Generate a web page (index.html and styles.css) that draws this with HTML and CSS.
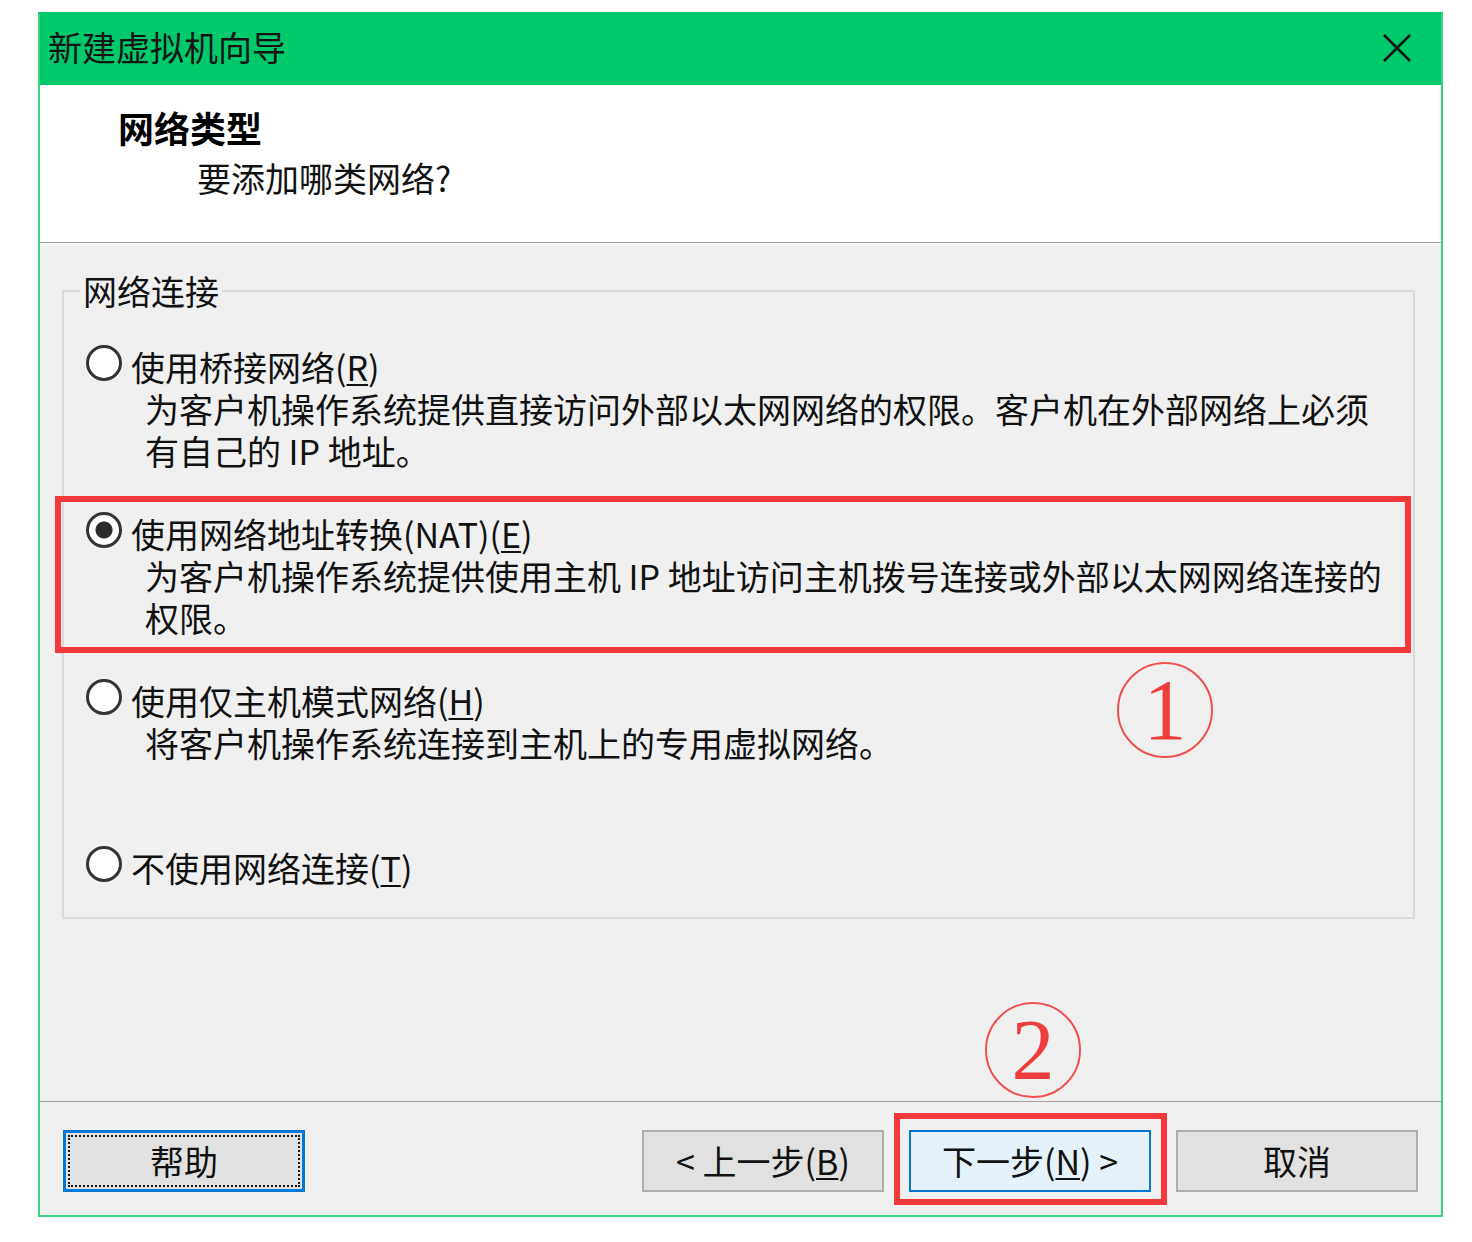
FILE: index.html
```html
<!DOCTYPE html>
<html lang="zh-CN">
<head>
    <meta charset="UTF-8">
    <meta name="viewport" content="width=device-width, initial-scale=1.0">
    <title>新建虚拟机向导</title>
    <link rel="stylesheet" href="styles.css">
</head>
<body>
    <div class="wizard">
        <div class="title-bar">
            <span class="title">新建虚拟机向导</span>
            <svg class="close-icon" width="30" height="30" viewBox="0 0 30 30">
                <path d="M2 2 L28 28 M28 2 L2 28" stroke="#151515" stroke-width="2.6" fill="none"/>
            </svg>
        </div>

        <div class="header">
            <h1>网络类型</h1>
            <p>要添加哪类网络?</p>
        </div>

        <div class="content">
            <fieldset class="group">
                <legend>网络连接</legend>

                <div class="option">
                    <div class="option-label"><span class="radio"></span>使用桥接网络(<u>R</u>)</div>
                    <div class="option-desc">为客户机操作系统提供直接访问外部以太网网络的权限。客户机在外部网络上必须<br>有自己的 IP 地址。</div>
                </div>

                <div class="option">
                    <div class="option-label"><span class="radio checked"></span>使用网络地址转换(NAT)(<u>E</u>)</div>
                    <div class="option-desc">为客户机操作系统提供使用主机 IP 地址访问主机拨号连接或外部以太网网络连接的<br>权限。</div>
                </div>

                <div class="option">
                    <div class="option-label"><span class="radio"></span>使用仅主机模式网络(<u>H</u>)</div>
                    <div class="option-desc">将客户机操作系统连接到主机上的专用虚拟网络。</div>
                </div>

                <div class="option option-none">
                    <div class="option-label"><span class="radio"></span>不使用网络连接(<u>T</u>)</div>
                </div>
            </fieldset>
        </div>

        <div class="footer">
            <button class="btn btn-help">帮助</button>
            <div class="nav-buttons">
                <button class="btn">&lt; 上一步(<u>B</u>)</button>
                <button class="btn btn-default">下一步(<u>N</u>) &gt;</button>
                <button class="btn">取消</button>
            </div>
        </div>

        <!-- annotations -->
        <div class="mark-box mark-nat"></div>
        <div class="mark-box mark-next"></div>
        <div class="mark-num mark-one">1</div>
        <div class="mark-num mark-two">2</div>
    </div>
</body>
</html>
```

FILE: styles.css
```css
body {
    margin: 0;
    background: #fff;
    font-family: "Noto Sans CJK SC", "Noto Sans", sans-serif;
    color: #111;
}
.wizard {
    position: relative;
    margin: 12px 0 0 38px;
    width: 1405px;
    height: 1205px;
    box-sizing: border-box;
    border: 2px solid #3fd184;
    border-top-color: #00c96b;
    background: #f0f0f0;
    display: flex;
    flex-direction: column;
}
.title-bar {
    height: 71px;
    background: #00c96b;
    display: flex;
    justify-content: space-between;
    align-items: center;
    padding-left: 8px;
    padding-right: 29px;
}
.title {
    font-size: 34px;
    line-height: 34px;
    color: #141414;
    margin-top: -6px;
}
.close-icon {
    margin-top: -4px;
}
.header {
    height: 133px;
    padding-top: 24px;
    background: #fff;
    border-bottom: 1px solid #a0a0a0;
}
.header h1 {
    margin: 0;
    padding-left: 78px;
    font-size: 36px;
    line-height: 36px;
    font-weight: bold;
    color: #000;
}
.header p {
    margin: 16px 0 0;
    padding-left: 157px;
    font-size: 34px;
    line-height: 34px;
}
.content {
    height: 857px;
    border-top: 1px solid #fff;
}
.group {
    margin: 28px 26px 0 22px;
    padding: 36px 20px 28px 22px;
    border: 2px solid #dadada;
    min-width: 0;
}
.group legend {
    margin-left: -6px;
    padding: 0 3px;
    font-size: 34px;
    line-height: 38px;
}
.option + .option {
    margin-top: 41px;
}
.option-none {
    margin-top: 83px !important;
}
.option-label {
    display: flex;
    align-items: center;
    height: 42px;
    font-size: 34px;
    line-height: 42px;
    white-space: nowrap;
}
.option-desc {
    padding-left: 59px;
    font-size: 34px;
    line-height: 42px;
    white-space: nowrap;
}
.radio {
    width: 36px;
    height: 36px;
    box-sizing: border-box;
    border: 3px solid #333;
    border-radius: 50%;
    background: #fff;
    margin-right: 9px;
    margin-bottom: 8px;
    flex-shrink: 0;
}
.radio.checked {
    background: radial-gradient(circle, #2b2b2b 8px, #fff 9px);
}
u {
    text-decoration-thickness: 2px;
    text-underline-offset: 3px;
}
.footer {
    flex: 1;
    border-top: 1px solid #a0a0a0;
    display: flex;
    justify-content: space-between;
    align-items: flex-start;
    padding: 28px 23px 0;
}
.nav-buttons {
    display: flex;
    gap: 25px;
}
.btn {
    width: 242px;
    height: 62px;
    padding: 0;
    box-sizing: border-box;
    border: 2px solid #adadad;
    background: #e1e1e1;
    font-family: inherit;
    font-size: 34px;
    line-height: 40px;
    color: #111;
}
.btn-help {
    border: 3px solid #0078d7;
    outline: 2px dotted #1a1a1a;
    outline-offset: -7px;
}
.btn-default {
    border-color: #0078d7;
    background: #e5f1fb;
}
.mark-box {
    position: absolute;
    box-sizing: border-box;
    border: 6px solid #f4393d;
}
.mark-nat {
    left: 15px;
    top: 482px;
    width: 1356px;
    height: 157px;
}
.mark-next {
    left: 854px;
    top: 1099px;
    width: 273px;
    height: 92px;
}
.mark-num {
    position: absolute;
    width: 96px;
    height: 96px;
    box-sizing: border-box;
    border: 2px solid #f05050;
    border-radius: 50%;
    display: flex;
    align-items: center;
    justify-content: center;
    font-family: "Liberation Serif", serif;
    font-size: 86px;
    line-height: 1;
    color: #ee3d3d;
}
.mark-one {
    left: 1077px;
    top: 648px;
}
.mark-two {
    left: 945px;
    top: 988px;
}
```
